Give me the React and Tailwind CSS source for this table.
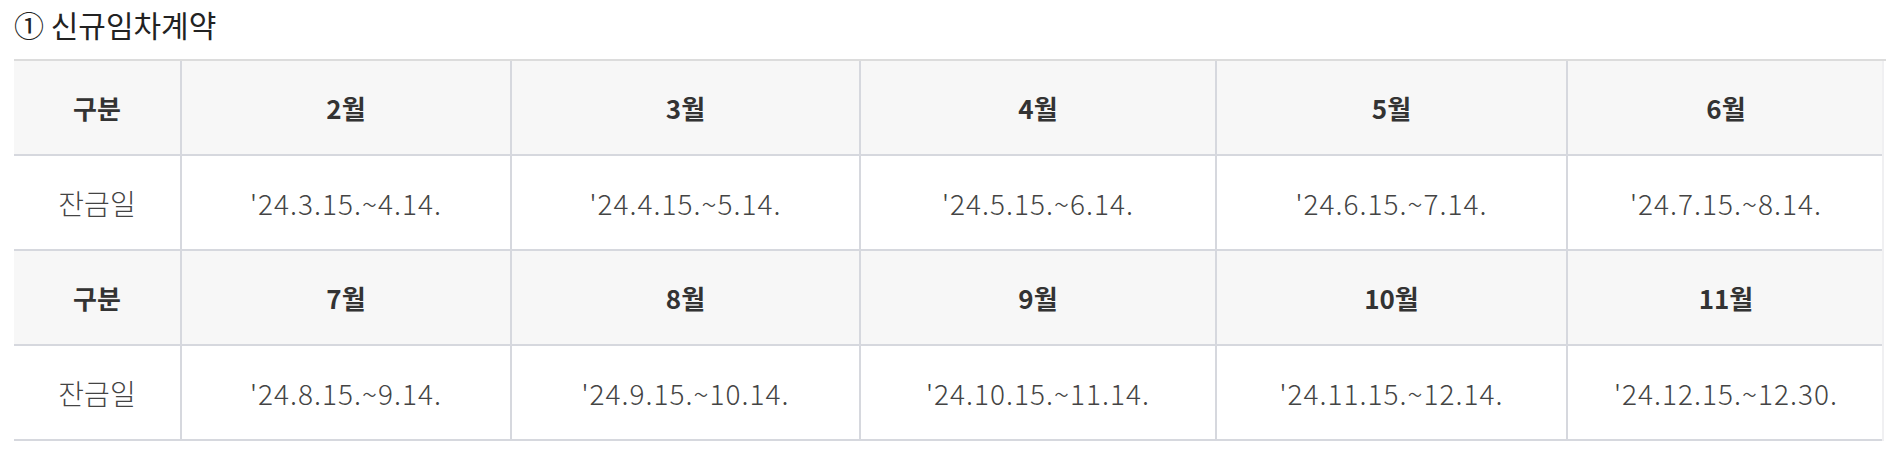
const rows = [
  {
    months: ["2월", "3월", "4월", "5월", "6월"],
    dates: ["'24.3.15.~4.14.", "'24.4.15.~5.14.", "'24.5.15.~6.14.", "'24.6.15.~7.14.", "'24.7.15.~8.14."],
  },
  {
    months: ["7월", "8월", "9월", "10월", "11월"],
    dates: ["'24.8.15.~9.14.", "'24.9.15.~10.14.", "'24.10.15.~11.14.", "'24.11.15.~12.14.", "'24.12.15.~12.30."],
  },
]

const cols = "grid grid-cols-[166px_330px_349px_356px_351px_318px]"

const HeadRow = ({ months }) => (
  <div className={`${cols} h-[95px] bg-[#f7f7f7] border-b-2 border-[#d6d8de] text-[26px] font-bold text-[#333]`}>
    <div className="flex items-center justify-center">구분</div>
    {months.map((m) => (
      <div key={m} className="flex items-center justify-center border-l-2 border-[#d6d8de]">
        {m}
      </div>
    ))}
  </div>
)

const DateRow = ({ dates }) => (
  <div className={`${cols} h-[95px] bg-white border-b-2 border-[#d6d8de] text-[28px] font-light text-[#444]`}>
    <div className="flex items-center justify-center">잔금일</div>
    {dates.map((d) => (
      <div key={d} className="flex items-center justify-center border-l-2 border-[#d6d8de] tracking-[1px]">
        {d}
      </div>
    ))}
  </div>
)

export default function App() {
  return (
    <div className="w-[1886px] h-[462px] bg-white pl-[14px] font-['Noto_Sans_CJK_KR','Noto_Sans',sans-serif] overflow-hidden">
      <div className="h-[59px] flex items-start pt-[3px]">
        <h3 className="text-[30px] leading-[42px] text-[#222]">① 신규임차계약</h3>
      </div>
      <div className="w-[1872px] border-t-2 border-[#dcdcdc]">
        <div className="w-[1870px] border-r-2 border-[#f0f0f2]">
          {rows.map((r, i) => (
            <div key={i}>
              <HeadRow months={r.months} />
              <DateRow dates={r.dates} />
            </div>
          ))}
        </div>
      </div>
    </div>
  )
}
